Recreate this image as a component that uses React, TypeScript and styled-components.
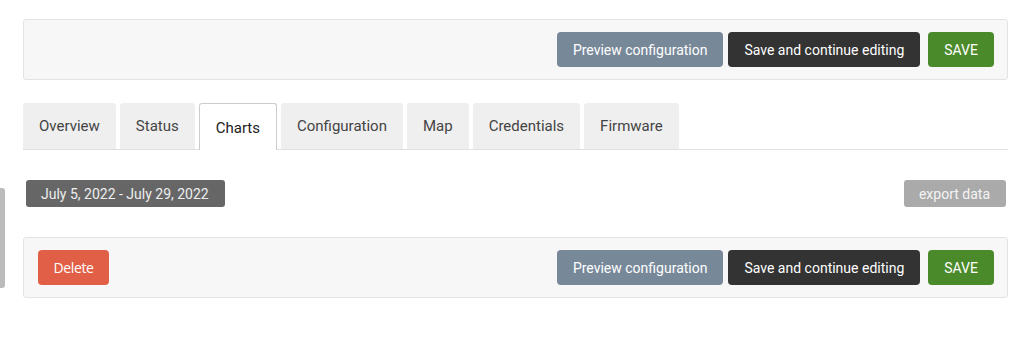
import styled, { createGlobalStyle } from "styled-components";

const GlobalStyle = createGlobalStyle`
  body {
    margin: 0;
    background: #fff;
    font-family: Roboto, "Liberation Sans", sans-serif;
  }
`;

const Page = styled.div`
  padding: 19px 24px 0 23px;
`;

const SideHandle = styled.div`
  position: fixed;
  left: 0;
  top: 188px;
  width: 5px;
  height: 100px;
  background: #bbb;
  border-radius: 0 3px 3px 0;
`;

const ActionBar = styled.div<{ $spread?: boolean }>`
  display: flex;
  align-items: center;
  justify-content: ${(p) => (p.$spread ? "space-between" : "flex-end")};
  height: 59px;
  padding: 0 13px 0 14px;
  background: #f7f7f7;
  border: 1px solid #e3e3e3;
  border-radius: 3px;
`;

const ButtonGroup = styled.div`
  display: flex;
  align-items: center;
`;

const Button = styled.button<{ $variant: "preview" | "dark" | "save" | "delete" }>`
  height: 35px;
  padding: 0 16px;
  border: none;
  border-radius: 4px;
  color: #fff;
  font-family: Roboto, sans-serif;
  font-size: 14px;
  cursor: pointer;
  background: ${(p) =>
    ({
      preview: "#778899",
      dark: "#333333",
      save: "#4b8a2a",
      delete: "#e05f46",
    })[p.$variant]};
  margin-left: ${(p) =>
    p.$variant === "dark" ? "5px" : p.$variant === "save" ? "8px" : "0"};
`;

const DeleteButton = styled(Button)`
  width: 71px;
  padding: 0;
  font-family: "Open Sans", sans-serif;
  letter-spacing: -0.4px;
`;

const TabList = styled.div`
  display: flex;
  gap: 4px;
  margin-top: 23px;
  border-bottom: 1px solid #e0e0e0;
`;

const Tab = styled.div<{ $active?: boolean }>`
  box-sizing: border-box;
  display: flex;
  align-items: center;
  padding: ${(p) => (p.$active ? "1px 16px 0" : "0 15px 2px")};
  font-size: 15px;
  color: ${(p) => (p.$active ? "#222" : "#444")};
  background: ${(p) => (p.$active ? "#fff" : "#efefef")};
  border: 1px solid ${(p) => (p.$active ? "#ccc" : "transparent")};
  border-bottom: none;
  border-radius: 3px 3px 0 0;
  margin-bottom: ${(p) => (p.$active ? "-1px" : "0")};
  height: ${(p) => (p.$active ? "47px" : "46px")};
`;

const FilterRow = styled.div`
  display: flex;
  justify-content: space-between;
  align-items: center;
  margin: 30px 2px 30px 3px;
`;

const Pill = styled.div<{ $muted?: boolean }>`
  height: 27px;
  display: flex;
  align-items: center;
  padding: 0 16px 0 15px;
  border-radius: 3px;
  font-size: 14px;
  color: ${(p) => (p.$muted ? "#f4f4f4" : "#eee")};
  background: ${(p) => (p.$muted ? "#aaa" : "#666")};
`;

const tabs = ["Overview", "Status", "Charts", "Configuration", "Map", "Credentials", "Firmware"];

function SaveButtons() {
  return (
    <ButtonGroup>
      <Button $variant="preview">Preview configuration</Button>
      <Button $variant="dark">Save and continue editing</Button>
      <Button $variant="save">SAVE</Button>
    </ButtonGroup>
  );
}

export default function App() {
  return (
    <Page>
      <GlobalStyle />
      <SideHandle />
      <ActionBar>
        <SaveButtons />
      </ActionBar>

      <TabList>
        {tabs.map((t) => (
          <Tab key={t} $active={t === "Charts"}>
            {t}
          </Tab>
        ))}
      </TabList>

      <FilterRow>
        <Pill>July 5, 2022 - July 29, 2022</Pill>
        <Pill $muted>export data</Pill>
      </FilterRow>

      <ActionBar $spread>
        <DeleteButton $variant="delete">Delete</DeleteButton>
        <SaveButtons />
      </ActionBar>
    </Page>
  );
}
